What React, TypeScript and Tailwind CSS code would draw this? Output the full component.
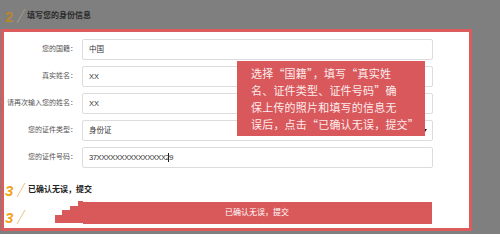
import React from "react";

type Field = {
  label: string;
  value: string;
  select?: boolean;
  cursor?: boolean;
};

const fields: Field[] = [
  { label: "您的国籍：", value: "中国" },
  { label: "真实姓名：", value: "XX" },
  { label: "请再次输入您的姓名：", value: "XX" },
  { label: "您的证件类型：", value: "身份证", select: true },
  { label: "您的证件号码：", value: "37XXXXXXXXXXXXXXX29", cursor: true },
];

function StepMark({ n, color, slash, italic }: { n: string; color: string; slash: string; italic?: boolean }) {
  return (
    <div className="flex items-center w-[22px] shrink-0">
      <span className={`text-[15px] font-bold leading-none ${italic ? "italic" : ""} ${color}`}>{n}</span>
      <svg width="10" height="16" viewBox="0 0 10 16" className="ml-[3px]">
        <path d="M1 15L9 1" stroke={slash} strokeWidth="1" fill="none" />
      </svg>
    </div>
  );
}

export default function App() {
  return (
    <div className="w-[500px] h-[234px] bg-[#7f7f7f] overflow-hidden font-['Liberation_Sans','Noto_Sans_CJK_SC',sans-serif]">
      {/* step 2 header */}
      <div className="h-[29px] flex items-center pl-[5px] pt-[3px]">
        <StepMark n="2" color="text-[#b8862e]" slash="#a89a80" />
        <span className="text-[8px] font-bold text-[#2a2a2a]">填写您的身份信息</span>
      </div>

      {/* form panel */}
      <div className="relative ml-[1px] w-[471px] h-[202px] border-[3px] border-[#dc5b5c] bg-white">
        <div className="flex flex-col gap-[6px] pt-[7px]">
          {fields.map((f) => (
            <div key={f.label} className="flex items-center">
              <div className="w-[74px] text-right text-[7px] text-[#555] pr-[1px]">{f.label}</div>
              <div className="ml-[4px] w-[351px] h-[21px] border border-[#dcdcdc] rounded-[2px] flex items-center pl-[6px] pr-[5px] text-[7.5px] text-[#333]">
                <span className={f.cursor ? "tracking-[-0.4px]" : ""}>{f.value}</span>
                {f.cursor && <span className="ml-[-5px] w-px h-[9px] bg-[#222]" />}
                {f.select && (
                  <span className="ml-auto w-0 h-0 border-l-[2.5px] border-r-[2.5px] border-t-[3px] border-l-transparent border-r-transparent border-t-[#111]" />
                )}
              </div>
            </div>
          ))}
        </div>

        {/* step 3 */}
        <div className="flex items-center mt-[14px] pl-[1px]">
          <StepMark n="3" color="text-[#f3a21c]" slash="#f0c27a" italic />
          <span className="text-[8px] font-bold text-[#222] ml-[1px]">已确认无误，提交</span>
        </div>

        <div className="relative flex items-center mt-[3px]">
          <div className="flex items-center w-[22px] pl-[1px] mt-[8px]">
            <StepMark n="3" color="text-[#f3a21c]" slash="#f0c27a" italic />
          </div>
          <div className="ml-[56px] w-[350px] h-[22px] bg-[#d9585a] flex items-center justify-center text-[8px] text-white">
            已确认无误，提交
          </div>
          <svg className="absolute left-[48px] top-0" width="32" height="26" viewBox="0 0 32 26">
            <path d="M31 0H26V5H18V9H10V14H3V22H31Z" fill="#d9585a" />
            <path d="M0 22H31V25H0Z" fill="#ffffff" />
          </svg>
        </div>

        {/* tooltip callout */}
        <div className="absolute left-[233px] top-[29px] w-[188px] h-[75px] bg-[#d9585b] pl-[14px] pr-[6px] pt-[4px] text-[11px] leading-[17px] text-[#fbecec] tracking-[0.2px] font-['Noto_Sans_CJK_SC',serif]">
          <p>选择“国籍”，填写“真实姓</p>
          <p>名、证件类型、证件号码”确</p>
          <p>保上传的照片和填写的信息无</p>
          <p>误后，点击“已确认无误，提交”</p>
        </div>
      </div>
    </div>
  );
}
